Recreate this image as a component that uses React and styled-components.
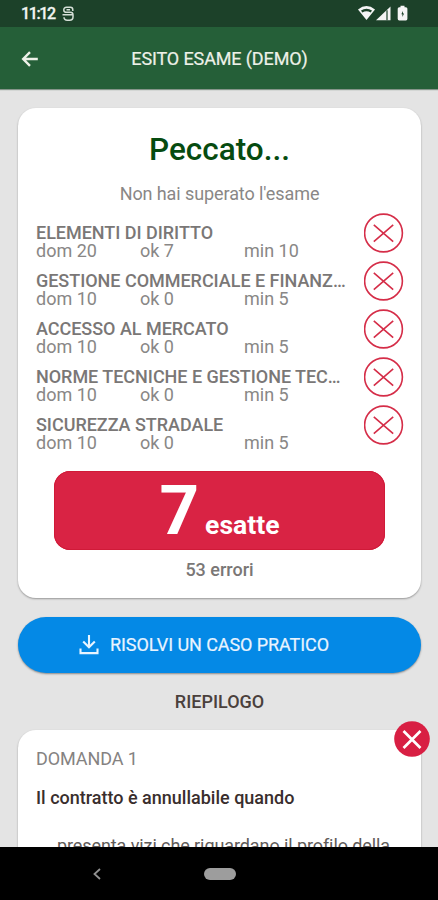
import React from "react";
import styled, { createGlobalStyle } from "styled-components";

const GlobalStyle = createGlobalStyle`
  *, *::before, *::after { box-sizing: border-box; }
  body { margin: 0; background: #e4e4e4; }
`;

const Screen = styled.div`
  width: 438px;
  height: 900px;
  display: flex;
  flex-direction: column;
  overflow: hidden;
  background: #e4e4e4;
  font-family: Roboto, sans-serif;
  font-size: 18px;
  line-height: 18px;
  color: #7a7776;
`;

const StatusBar = styled.div`
  flex: none;
  height: 27px;
  background: #1c4129;
  display: flex;
  align-items: center;
  padding: 0 29px 0 21px;
`;

const Clock = styled.span`
  font-size: 16px;
  font-weight: 500;
  color: #f2f5f2;
  width: 41px;
  padding-top: 1px;
  letter-spacing: -1.35px;
  white-space: nowrap;
  -webkit-text-stroke: 0.3px currentColor;
`;

const StatusIcons = styled.div`
  margin-left: auto;
  display: flex;
`;

const Header = styled.header`
  flex: none;
  height: 62px;
  padding-top: 1px;
  background: #255f38;
  box-shadow: 0 1px 1px rgba(37, 70, 48, 0.5);
  display: grid;
  grid-template-columns: 60px 1fr 60px;
  align-items: center;
  color: #eef1e8;
  z-index: 1;
`;

const BackButton = styled.button`
  border: 0;
  padding: 0 0 0 18px;
  background: none;
  color: inherit;
  display: flex;
`;

const HeaderTitle = styled.h1`
  margin: 0;
  padding-left: 1px;
  font-size: 18px;
  font-weight: 400;
  text-align: center;
  white-space: nowrap;
  letter-spacing: -0.12px;
  -webkit-text-stroke: 0.2px currentColor;
`;

const Content = styled.main`
  flex: 1;
  min-height: 0;
  overflow: hidden;
  padding: 19px 17px 0 18px;
  display: flex;
  flex-direction: column;
`;

const Card = styled.section`
  flex: none;
  background: #fff;
  border-radius: 18px;
  box-shadow: 0 1px 2px rgba(0, 0, 0, 0.34);
`;

const ResultCard = styled(Card)`
  height: 490px;
  padding: 24px 18px 0;
  display: flex;
  flex-direction: column;
`;

const ResultTitle = styled.h2`
  margin: 0;
  font-size: 31.5px;
  line-height: 36px;
  font-weight: 500;
  text-align: center;
  color: #064b10;
`;

const ResultMessage = styled.p`
  margin: 17px 0 10px;
  text-align: center;
  letter-spacing: -0.09px;
  color: #898786;
`;

const SubjectList = styled.ul`
  list-style: none;
  margin: 0;
  padding: 0;
`;

const SubjectRow = styled.li`
  height: 48px;
  display: flex;
  justify-content: space-between;
`;

const SubjectInfo = styled.div`
  width: 311px;
  padding-top: 11px;
`;

const SubjectName = styled.div`
  margin: -2px 0;
  padding: 2px 0;
  font-weight: 500;
  white-space: nowrap;
  letter-spacing: -0.03px;
  overflow: hidden;
  text-overflow: ellipsis;
`;

const SubjectStats = styled.div`
  display: grid;
  grid-template-columns: 104px 104px 1fr;
  color: #898786;
`;

const FailIcon = styled.svg`
  flex: none;
  width: 40px;
  height: 40px;
  margin-right: -1px;
`;

const ScoreBox = styled.div`
  flex: none;
  height: 79px;
  margin: 18px 18px 0;
  border-radius: 16px;
  background: #d92344;
  box-shadow: inset 0 0 0 1px #d01a38;
  color: #fff;
  font-weight: 700;
  display: flex;
  justify-content: center;
  align-items: baseline;
  gap: 6px;
  line-height: 79px;
`;

const ScoreNumber = styled.span`
  font-size: 69px;
`;

const ScoreLabel = styled.span`
  font-size: 26.5px;
`;

const ErrorCount = styled.p`
  margin: 11px 0 0;
  font-weight: 500;
  text-align: center;
`;

const PracticeButton = styled.button`
  flex: none;
  height: 56px;
  margin: 19px 0 0;
  border: 0;
  border-radius: 28px;
  padding: 0 0 0 61px;
  background: #0489e6;
  box-shadow: 0 1px 2px rgba(0, 0, 0, 0.4);
  color: #e8f4ff;
  font: 400 18px/18px Roboto, sans-serif;
  letter-spacing: -0.08px;
  display: flex;
  align-items: center;
  gap: 11px;
  white-space: nowrap;
  -webkit-text-stroke: 0.2px currentColor;
`;

const SummaryTitle = styled.h3`
  margin: 20px 0 19px;
  font-size: 18px;
  font-weight: 500;
  text-align: center;
  color: #4a403c;
`;

const QuestionCard = styled(Card)`
  position: relative;
  height: 220px;
  padding: 20px 18px 0;
`;

const QuestionNumber = styled.div`
  letter-spacing: -0.1px;
  color: #858281;
`;

const QuestionText = styled.div`
  margin-top: 21px;
  font-weight: 500;
  color: #392e2d;
`;

const Answer = styled.div`
  margin: 30px 0 0 21px;
  white-space: nowrap;
  letter-spacing: -0.09px;
  color: #5f5b59;
`;

const WrongBadge = styled.svg`
  position: absolute;
  width: 36px;
  height: 36px;
  top: -9px;
  right: -9px;
`;

const NavBar = styled.nav`
  flex: none;
  height: 53px;
  background: #000;
  display: flex;
  align-items: center;
  padding-left: 91px;
`;

const HomePill = styled.span`
  width: 32px;
  height: 12px;
  border-radius: 6px;
  background: #9d9d9d;
  margin-left: 101px;
`;

const subjects = [
  { name: "ELEMENTI DI DIRITTO", dom: 20, ok: 7, min: 10 },
  { name: "GESTIONE COMMERCIALE E FINANZIARIA", dom: 10, ok: 0, min: 5 },
  { name: "ACCESSO AL MERCATO", dom: 10, ok: 0, min: 5 },
  { name: "NORME TECNICHE E GESTIONE TECNICA", dom: 10, ok: 0, min: 5 },
  { name: "SICUREZZA STRADALE", dom: 10, ok: 0, min: 5 },
];

function Subject({ name, dom, ok, min }) {
  return (
    <SubjectRow>
      <SubjectInfo>
        <SubjectName>{name}</SubjectName>
        <SubjectStats>
          <span>dom {dom}</span>
          <span>ok {ok}</span>
          <span>min {min}</span>
        </SubjectStats>
      </SubjectInfo>
      <FailIcon viewBox="0 0 40 40" fill="none" stroke="#d52d48" strokeWidth="1.6">
        <circle cx="19.500" cy="20" r="18.900" />
        <path d="M9.800 11.800 29.200 28.700M29.200 11.800 9.800 28.700" />
      </FailIcon>
    </SubjectRow>
  );
}

export default function App() {
  return (
    <>
      <GlobalStyle />
      <Screen>
        <StatusBar>
          <Clock>11:12</Clock>
          <svg width="13" height="16" viewBox="0 0 13 16" fill="none" stroke="#d5dfd7" strokeWidth="1.5">
            <path d="M10.800 5V3.800C10.800 2.200 9.800 1.300 8.400 1.300H4.500C2.800 1.300 1.800 2.400 1.800 3.900S2.800 6.300 4.500 6.300H8.200C10 6.300 11 7.500 11 9v2c0 2-1.500 3.200-3.400 3.200H5.200C3.200 14.200 2 13 2 11.200M.5 8.800h10M4.500 3.800h3.500" />
          </svg>
          <StatusIcons>
            <svg width="51" height="17" viewBox="0 0 51 17" fill="#f5f5f5">
              <path d="M0 4.500Q8.500-2.300 17 4.500L8.500 15z" />
              <path d="M3 5.400Q8.500 2 14 5.400L12.700 7.400Q8.500 5 4.300 7.400z" fill="#1c4129" />
              <path d="M18 15.300 32.500 1.400v13.900z" />
              <path d="M29 5.200v10.100" stroke="#1c4129" strokeWidth="1.200" />
              <path d="M42.500.7h4v1.600h1.400q1.500 0 1.500 1.500v10q0 1.800-1.500 1.800h-6.700q-1.500 0-1.500-1.800v-10q0-1.500 1.500-1.500h1.300z" />
              <path d="m45 6-1.700 3.300h1.100V12l1.700-3.400h-1.100z" fill="#1c4129" />
            </svg>
          </StatusIcons>
        </StatusBar>
        <Header>
          <BackButton aria-label="Indietro">
            <svg width="24" height="20" viewBox="0 0 24 20" fill="none" stroke="currentColor" strokeWidth="2.400">
              <path d="M19.800 10H6M12 3.200 5.200 10l6.800 6.800" />
            </svg>
          </BackButton>
          <HeaderTitle>ESITO ESAME (DEMO)</HeaderTitle>
        </Header>
        <Content>
          <ResultCard>
            <ResultTitle>Peccato...</ResultTitle>
            <ResultMessage>Non hai superato l'esame</ResultMessage>
            <SubjectList>
              {subjects.map((s) => (
                <Subject key={s.name} {...s} />
              ))}
            </SubjectList>
            <ScoreBox>
              <ScoreNumber>7</ScoreNumber>
              <ScoreLabel>esatte</ScoreLabel>
            </ScoreBox>
            <ErrorCount>53 errori</ErrorCount>
          </ResultCard>
          <PracticeButton>
            <svg width="20" height="20" viewBox="0 0 20 20" fill="none" stroke="currentColor" strokeWidth="2.100">
              <path d="M10 0v12M4.200 6.500 10 12.300 15.800 6.500M1.500 13.500v4.600h17v-4.600" />
            </svg>
            RISOLVI UN CASO PRATICO
          </PracticeButton>
          <SummaryTitle>RIEPILOGO</SummaryTitle>
          <QuestionCard>
            <WrongBadge viewBox="0 0 36 36">
              <circle cx="18" cy="18" r="17.800" fill="#d81f43" />
              <path d="m9.500 10 17 17M26.500 10l-17 17" stroke="#fff" strokeWidth="2.700" />
            </WrongBadge>
            <QuestionNumber>DOMANDA 1</QuestionNumber>
            <QuestionText>Il contratto è annullabile quando</QuestionText>
            <Answer>presenta vizi che riguardano il profilo della</Answer>
          </QuestionCard>
        </Content>
        <NavBar>
          <svg width="12" height="14" viewBox="0 0 12 14" fill="none" stroke="#919191" strokeWidth="1.800">
            <path d="M9 2 3.500 7 9 12" />
          </svg>
          <HomePill />
        </NavBar>
      </Screen>
    </>
  );
}
